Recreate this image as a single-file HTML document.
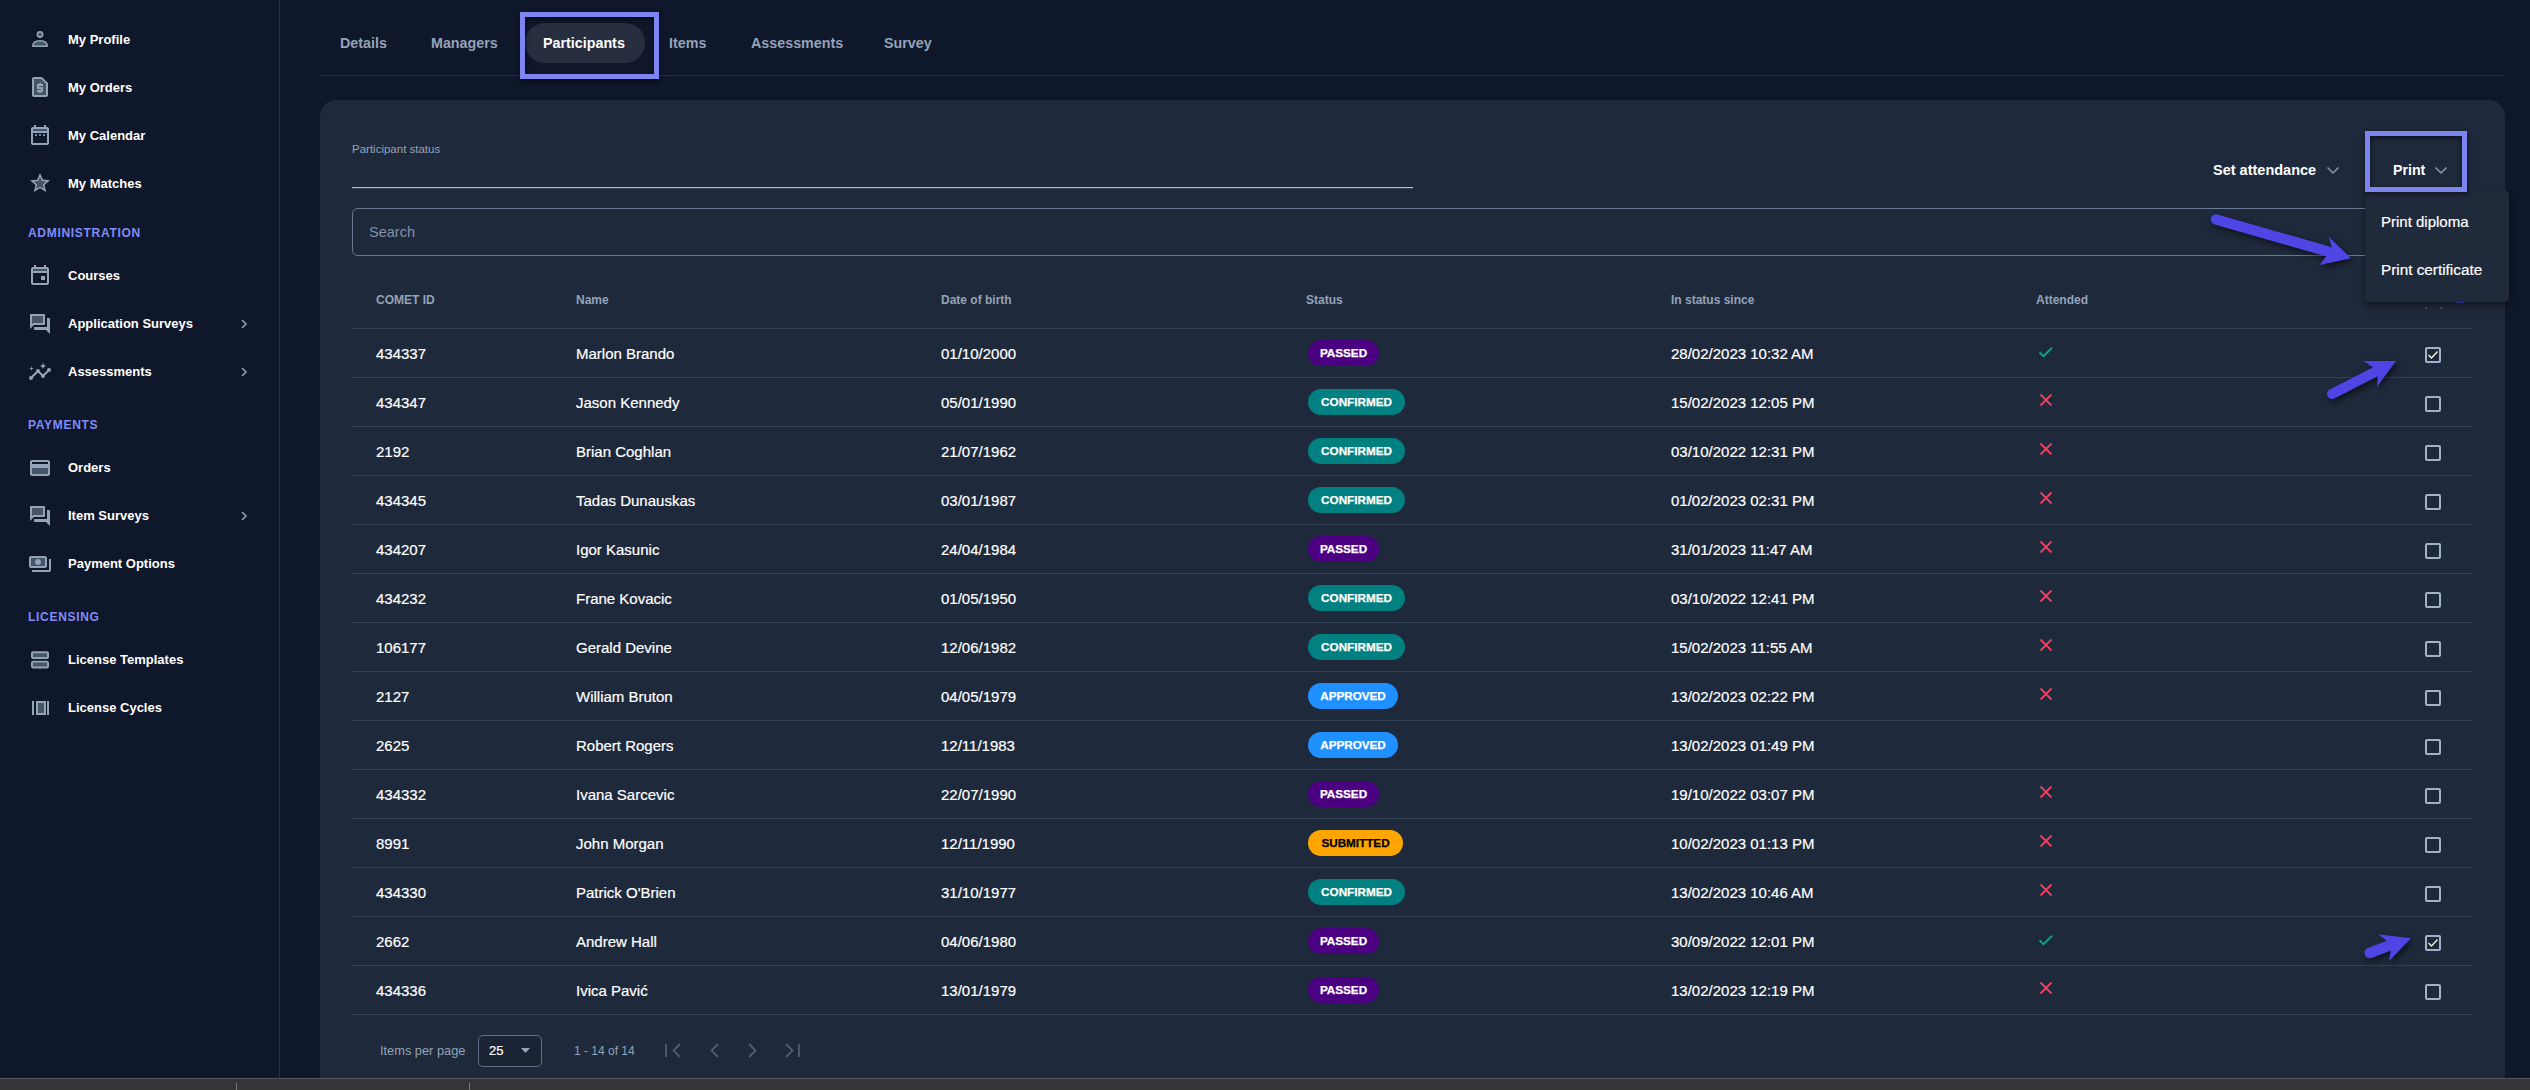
<!DOCTYPE html>
<html><head><meta charset="utf-8">
<style>
*{margin:0;padding:0;box-sizing:border-box}
html,body{width:2530px;height:1090px;overflow:hidden;background:#0f172a;font-family:"Liberation Sans",sans-serif;color:#fff}
.a{position:absolute;white-space:nowrap}
#side{position:absolute;left:0;top:0;width:280px;height:1078px;background:#0f172a;border-right:1px solid #273042}
.ni{position:absolute;margin-top:1px;left:68px;height:20px;line-height:20px;font-size:13px;font-weight:bold;color:#fff}
.ic{position:absolute;margin-top:1px;left:28px;width:24px;height:24px}
.ic svg{width:24px;height:24px;display:block}
.sh{position:absolute;margin-top:1px;left:28px;height:20px;line-height:20px;font-size:12px;font-weight:bold;color:#818cf8;letter-spacing:0.7px}
.chev{position:absolute;margin-top:1px;left:236px;width:16px;height:16px}
.tab{position:absolute;top:33px;height:20px;line-height:20px;font-size:14.3px;font-weight:bold;color:#94a3b8}
#card{position:absolute;left:320px;top:100px;width:2185px;height:1000px;background:#1e293b;border-radius:16px}
.hd{position:absolute;top:290px;height:20px;line-height:20px;font-size:12px;font-weight:bold;color:#94a3b8}
.hl{position:absolute;left:352px;width:2121px;height:1px;background:#334155}
.c{position:absolute;height:20px;line-height:20px;font-size:15px;color:#fff;-webkit-text-stroke:0.2px currentColor}
.b{position:absolute;left:1308px;height:26px;line-height:26px;border-radius:13px;font-size:11.7px;font-weight:bold;color:#fff;text-align:center;-webkit-text-stroke:0.25px currentColor}
.P{background:#4b0082;width:71px}
.C{background:#008080;width:97px}
.A{background:#1e90ff;width:90px}
.S{background:#ffa500;width:95px;color:#000}
.att{position:absolute;left:2034px;width:24px;height:24px}
.cb{position:absolute;left:2425px;width:16px;height:16px;border:2px solid #a3b1c9;border-radius:2px}
</style></head><body>
<div id="side"></div>
<!-- sidebar -->
<div class="ic" style="top:26px"><svg viewBox="0 0 24 24"><circle cx="12" cy="7.5" r="2.6" fill="#475569" stroke="#94a3b8" stroke-width="1.6"/><path d="M4.8 19.2c0-3.6 3.2-5.4 7.2-5.4s7.2 1.8 7.2 5.4z" fill="#475569" stroke="#94a3b8" stroke-width="1.6" stroke-linejoin="round"/></svg></div>
<div class="ni" style="top:29px">My Profile</div>
<div class="ic" style="top:74px"><svg viewBox="0 0 24 24"><path fill="#475569" d="M13.17 4H6v16h12V8.83z"/><path fill="#94a3b8" d="M14 2H6c-1.1 0-1.99.9-1.99 2L4 20c0 1.1.89 2 1.99 2H18c1.1 0 2-.9 2-2V8l-6-6zm4 18H6V4h7.17L18 8.83V20zm-5-11V8h-2v1h-1c-.55 0-1 .45-1 1v3c0 .55.45 1 1 1h3v1H9v2h2v1h2v-1h1c.55 0 1-.45 1-1v-3c0-.55-.45-1-1-1h-3v-1h4V9h-2z"/></svg></div>
<div class="ni" style="top:77px">My Orders</div>
<div class="ic" style="top:123px"><svg viewBox="0 0 24 24"><path d="M5 5h14v2H5z" fill="#475569"/><path fill="#94a3b8" d="M19 3h-1V1h-2v2H8V1H6v2H5c-1.11 0-1.99.9-1.99 2L3 19c0 1.1.89 2 2 2h14c1.1 0 2-.9 2-2V5c0-1.1-.9-2-2-2zm0 16H5V9h14v10zm0-12H5V5h14v2zM7 10.2h1.8V12H7zm4.1 0h1.8V12h-1.8zm4.1 0H17V12h-1.8z"/></svg></div>
<div class="ni" style="top:125px">My Calendar</div>
<div class="ic" style="top:170px"><svg viewBox="0 0 24 24"><path fill="#475569" d="M12 15.4l-3.76 2.27 1-4.28-3.32-2.88 4.38-.38L12 6.1l1.71 4.04 4.38.38-3.32 2.88 1 4.28z"/><path fill="#94a3b8" d="M22 9.24l-7.19-.62L12 2 9.19 8.63 2 9.24l5.46 4.73L5.82 21 12 17.27 18.18 21l-1.63-7.03L22 9.24zM12 15.4l-3.76 2.27 1-4.28-3.32-2.88 4.38-.38L12 6.1l1.71 4.04 4.38.38-3.32 2.88 1 4.28L12 15.4z"/></svg></div>
<div class="ni" style="top:173px">My Matches</div>

<div class="sh" style="top:222px">ADMINISTRATION</div>
<div class="ic" style="top:263px"><svg viewBox="0 0 24 24"><path d="M5 5h14v2H5z" fill="#475569"/><path fill="#94a3b8" d="M19 3h-1V1h-2v2H8V1H6v2H5c-1.11 0-1.99.9-1.99 2L3 19c0 1.1.89 2 2 2h14c1.1 0 2-.9 2-2V5c0-1.1-.9-2-2-2zm0 16H5V9h14v10zm0-12H5V5h14v2zm-6 5h4v4h-4z"/></svg></div>
<div class="ni" style="top:265px">Courses</div>
<div class="ic" style="top:311px"><svg viewBox="0 0 24 24"><path fill="#475569" d="M15 4H4v9.17L5.17 12H15V4z"/><path fill="#94a3b8" d="M21 6h-2v9H6v2c0 .55.45 1 1 1h11l4 4V7c0-.55-.45-1-1-1zm-5 7c.55 0 1-.45 1-1V3c0-.55-.45-1-1-1H3c-.55 0-1 .45-1 1v14l4-4h10zM4 13.17V4h11v7H5.17L4 12.17z"/></svg></div>
<div class="ni" style="top:313px">Application Surveys</div>
<svg class="chev" style="top:315px" viewBox="0 0 16 16"><path d="M6 4l4 4-4 4" fill="none" stroke="#94a3b8" stroke-width="1.5"/></svg>
<div class="ic" style="top:359px"><svg viewBox="0 0 24 24"><path fill="#94a3b8" d="M21 8c-1.45 0-2.26 1.44-1.93 2.51l-3.55 3.56c-.3-.09-.74-.09-1.04 0l-2.55-2.55C12.27 10.45 11.46 9 10 9c-1.45 0-2.27 1.44-1.93 2.52l-4.56 4.55C2.44 15.74 1 16.55 1 18c0 1.1.9 2 2 2 1.45 0 2.26-1.44 1.93-2.51l4.55-4.56c.3.09.74.09 1.04 0l2.55 2.55C12.73 16.55 13.54 18 15 18c1.45 0 2.27-1.44 1.93-2.52l3.56-3.55c1.07.33 2.51-.48 2.51-1.93 0-1.1-.9-2-2-2z"/><path fill="#94a3b8" d="M15 9l.94-2.07L18 6l-2.06-.93L15 3l-.92 2.07L12 6l2.08.93zM3.5 11L4 9l2-.5L4 8l-.5-2L3 8l-2 .5L3 9z"/></svg></div>
<div class="ni" style="top:361px">Assessments</div>
<svg class="chev" style="top:363px" viewBox="0 0 16 16"><path d="M6 4l4 4-4 4" fill="none" stroke="#94a3b8" stroke-width="1.5"/></svg>

<div class="sh" style="top:414px">PAYMENTS</div>
<div class="ic" style="top:455px"><svg viewBox="0 0 24 24"><path d="M4 12h16v6H4z" fill="#475569"/><path fill="#94a3b8" d="M20 4H4c-1.11 0-1.99.89-1.99 2L2 18c0 1.11.89 2 2 2h16c1.11 0 2-.89 2-2V6c0-1.11-.89-2-2-2zm0 14H4v-6h16v6zm0-10H4V6h16v2z"/></svg></div>
<div class="ni" style="top:457px">Orders</div>
<div class="ic" style="top:503px"><svg viewBox="0 0 24 24"><path fill="#475569" d="M15 4H4v9.17L5.17 12H15V4z"/><path fill="#94a3b8" d="M21 6h-2v9H6v2c0 .55.45 1 1 1h11l4 4V7c0-.55-.45-1-1-1zm-5 7c.55 0 1-.45 1-1V3c0-.55-.45-1-1-1H3c-.55 0-1 .45-1 1v14l4-4h10zM4 13.17V4h11v7H5.17L4 12.17z"/></svg></div>
<div class="ni" style="top:505px">Item Surveys</div>
<svg class="chev" style="top:507px" viewBox="0 0 16 16"><path d="M6 4l4 4-4 4" fill="none" stroke="#94a3b8" stroke-width="1.5"/></svg>
<div class="ic" style="top:551px"><svg viewBox="0 0 24 24"><path fill="#475569" d="M3 6h14v8H3z"/><path fill="#94a3b8" d="M19 14V6c0-1.1-.9-2-2-2H3c-1.1 0-2 .9-2 2v8c0 1.1.9 2 2 2h14c1.1 0 2-.9 2-2zm-2 0H3V6h14v8zm-7-7c-1.66 0-3 1.34-3 3s1.34 3 3 3 3-1.34 3-3-1.34-3-3-3zm13 0v11c0 1.1-.9 2-2 2H4v-2h17V7h2z"/></svg></div>
<div class="ni" style="top:553px">Payment Options</div>

<div class="sh" style="top:606px">LICENSING</div>
<div class="ic" style="top:647px"><svg viewBox="0 0 24 24"><path d="M5 5h14v4H5zm0 10h14v4H5z" fill="#475569"/><path fill="#94a3b8" d="M19 13H5c-1.1 0-2 .9-2 2v4c0 1.1.9 2 2 2h14c1.1 0 2-.9 2-2v-4c0-1.1-.9-2-2-2zm0 6H5v-4h14v4zm0-16H5c-1.1 0-2 .9-2 2v4c0 1.1.9 2 2 2h14c1.1 0 2-.9 2-2V5c0-1.1-.9-2-2-2zm0 6H5V5h14v4z" transform="translate(0 0.5) scale(1 0.95)"/></svg></div>
<div class="ni" style="top:649px">License Templates</div>
<div class="ic" style="top:695px"><svg viewBox="0 0 24 24"><path d="M10 7h6v10h-6z" fill="#475569"/><path fill="#94a3b8" d="M4 5h2v14H4zm4 0v14h10V5H8zm8 12h-6V7h6v10zm3-12h2v14h-2z"/></svg></div>
<div class="ni" style="top:697px">License Cycles</div>

<!-- tabs -->
<div class="a" style="left:320px;top:75px;width:2185px;height:1px;background:#283143"></div>
<div class="tab" style="left:340px">Details</div>
<div class="tab" style="left:431px">Managers</div>
<div class="a" style="left:525px;top:23px;width:120px;height:40px;border-radius:20px;background:#262e40"></div>
<div class="tab" style="left:543px;color:#fff">Participants</div>
<div class="tab" style="left:669px">Items</div>
<div class="tab" style="left:751px">Assessments</div>
<div class="tab" style="left:884px">Survey</div>
<div class="a" style="left:520px;top:12px;width:139px;height:67px;border:5px solid #7f85f0;box-shadow:0 2px 5px rgba(0,0,0,.6),inset 0 2px 5px rgba(0,0,0,.6)"></div>

<!-- card -->
<div id="card"></div>
<div class="a" style="left:352px;top:139px;height:20px;line-height:20px;font-size:11.5px;color:#94a3b8">Participant status</div>
<div class="a" style="left:352px;top:187px;width:1061px;height:1px;background:#b6bfcc;box-shadow:0 0.5px 0 rgba(182,191,204,.35)"></div>

<div class="a" style="left:2213px;top:160px;height:20px;line-height:20px;font-size:14.5px;font-weight:bold">Set attendance</div>
<svg class="a" style="left:2326px;top:164px" width="14" height="12" viewBox="0 0 14 12"><path d="M1.5 3.5l5.5 5.5 5.5-5.5" fill="none" stroke="#8a98ae" stroke-width="1.5"/></svg>
<div class="a" style="left:2393px;top:160px;height:20px;line-height:20px;font-size:14.2px;font-weight:bold">Print</div>
<svg class="a" style="left:2434px;top:164px" width="14" height="12" viewBox="0 0 14 12"><path d="M1.5 3.5l5.5 5.5 5.5-5.5" fill="none" stroke="#8a98ae" stroke-width="1.5"/></svg>

<div class="a" style="left:352px;top:208px;width:2121px;height:48px;border:1.3px solid #6b7a92;border-radius:6px"></div>
<div class="a" style="left:369px;top:222px;height:20px;line-height:20px;font-size:14.5px;color:#8391a8">Search</div>

<!-- header -->
<div class="hd" style="left:376px">COMET ID</div>
<div class="hd" style="left:576px">Name</div>
<div class="hd" style="left:941px">Date of birth</div>
<div class="hd" style="left:1306px">Status</div>
<div class="hd" style="left:1671px">In status since</div>
<div class="hd" style="left:2036px">Attended</div>

<!--ROWS-->
<div class="hl" style="top:328px"></div>
<div class="c" style="left:376px;top:344px">434337</div>
<div class="c" style="left:576px;top:344px">Marlon Brando</div>
<div class="c" style="left:941px;top:344px">01/10/2000</div>
<div class="b P" style="top:340px">PASSED</div>
<div class="c" style="left:1671px;top:344px">28/02/2023 10:32 AM</div>
<svg class="att" style="top:340px" viewBox="0 0 24 24"><path d="M5.5 12.3l4 3.8 8.5-8.4" fill="none" stroke="#14a08c" stroke-width="1.9"/></svg>
<div class="cb" style="top:347px"><svg width="12" height="12" viewBox="0 0 12 12" style="position:absolute;left:0;top:0"><path d="M1.5 6l3 3 6-6.5" fill="none" stroke="#fff6dc" stroke-width="1.3"/></svg></div>
<div class="hl" style="top:377px"></div>
<div class="c" style="left:376px;top:393px">434347</div>
<div class="c" style="left:576px;top:393px">Jason Kennedy</div>
<div class="c" style="left:941px;top:393px">05/01/1990</div>
<div class="b C" style="top:389px">CONFIRMED</div>
<div class="c" style="left:1671px;top:393px">15/02/2023 12:05 PM</div>
<svg class="att" style="top:389px" viewBox="0 0 24 24"><path d="M6.5 5.5l11 11M17.5 5.5l-11 11" fill="none" stroke="#ef4060" stroke-width="1.8"/></svg>
<div class="cb" style="top:396px"></div>
<div class="hl" style="top:426px"></div>
<div class="c" style="left:376px;top:442px">2192</div>
<div class="c" style="left:576px;top:442px">Brian Coghlan</div>
<div class="c" style="left:941px;top:442px">21/07/1962</div>
<div class="b C" style="top:438px">CONFIRMED</div>
<div class="c" style="left:1671px;top:442px">03/10/2022 12:31 PM</div>
<svg class="att" style="top:438px" viewBox="0 0 24 24"><path d="M6.5 5.5l11 11M17.5 5.5l-11 11" fill="none" stroke="#ef4060" stroke-width="1.8"/></svg>
<div class="cb" style="top:445px"></div>
<div class="hl" style="top:475px"></div>
<div class="c" style="left:376px;top:491px">434345</div>
<div class="c" style="left:576px;top:491px">Tadas Dunauskas</div>
<div class="c" style="left:941px;top:491px">03/01/1987</div>
<div class="b C" style="top:487px">CONFIRMED</div>
<div class="c" style="left:1671px;top:491px">01/02/2023 02:31 PM</div>
<svg class="att" style="top:487px" viewBox="0 0 24 24"><path d="M6.5 5.5l11 11M17.5 5.5l-11 11" fill="none" stroke="#ef4060" stroke-width="1.8"/></svg>
<div class="cb" style="top:494px"></div>
<div class="hl" style="top:524px"></div>
<div class="c" style="left:376px;top:540px">434207</div>
<div class="c" style="left:576px;top:540px">Igor Kasunic</div>
<div class="c" style="left:941px;top:540px">24/04/1984</div>
<div class="b P" style="top:536px">PASSED</div>
<div class="c" style="left:1671px;top:540px">31/01/2023 11:47 AM</div>
<svg class="att" style="top:536px" viewBox="0 0 24 24"><path d="M6.5 5.5l11 11M17.5 5.5l-11 11" fill="none" stroke="#ef4060" stroke-width="1.8"/></svg>
<div class="cb" style="top:543px"></div>
<div class="hl" style="top:573px"></div>
<div class="c" style="left:376px;top:589px">434232</div>
<div class="c" style="left:576px;top:589px">Frane Kovacic</div>
<div class="c" style="left:941px;top:589px">01/05/1950</div>
<div class="b C" style="top:585px">CONFIRMED</div>
<div class="c" style="left:1671px;top:589px">03/10/2022 12:41 PM</div>
<svg class="att" style="top:585px" viewBox="0 0 24 24"><path d="M6.5 5.5l11 11M17.5 5.5l-11 11" fill="none" stroke="#ef4060" stroke-width="1.8"/></svg>
<div class="cb" style="top:592px"></div>
<div class="hl" style="top:622px"></div>
<div class="c" style="left:376px;top:638px">106177</div>
<div class="c" style="left:576px;top:638px">Gerald Devine</div>
<div class="c" style="left:941px;top:638px">12/06/1982</div>
<div class="b C" style="top:634px">CONFIRMED</div>
<div class="c" style="left:1671px;top:638px">15/02/2023 11:55 AM</div>
<svg class="att" style="top:634px" viewBox="0 0 24 24"><path d="M6.5 5.5l11 11M17.5 5.5l-11 11" fill="none" stroke="#ef4060" stroke-width="1.8"/></svg>
<div class="cb" style="top:641px"></div>
<div class="hl" style="top:671px"></div>
<div class="c" style="left:376px;top:687px">2127</div>
<div class="c" style="left:576px;top:687px">William Bruton</div>
<div class="c" style="left:941px;top:687px">04/05/1979</div>
<div class="b A" style="top:683px">APPROVED</div>
<div class="c" style="left:1671px;top:687px">13/02/2023 02:22 PM</div>
<svg class="att" style="top:683px" viewBox="0 0 24 24"><path d="M6.5 5.5l11 11M17.5 5.5l-11 11" fill="none" stroke="#ef4060" stroke-width="1.8"/></svg>
<div class="cb" style="top:690px"></div>
<div class="hl" style="top:720px"></div>
<div class="c" style="left:376px;top:736px">2625</div>
<div class="c" style="left:576px;top:736px">Robert Rogers</div>
<div class="c" style="left:941px;top:736px">12/11/1983</div>
<div class="b A" style="top:732px">APPROVED</div>
<div class="c" style="left:1671px;top:736px">13/02/2023 01:49 PM</div>
<div class="cb" style="top:739px"></div>
<div class="hl" style="top:769px"></div>
<div class="c" style="left:376px;top:785px">434332</div>
<div class="c" style="left:576px;top:785px">Ivana Sarcevic</div>
<div class="c" style="left:941px;top:785px">22/07/1990</div>
<div class="b P" style="top:781px">PASSED</div>
<div class="c" style="left:1671px;top:785px">19/10/2022 03:07 PM</div>
<svg class="att" style="top:781px" viewBox="0 0 24 24"><path d="M6.5 5.5l11 11M17.5 5.5l-11 11" fill="none" stroke="#ef4060" stroke-width="1.8"/></svg>
<div class="cb" style="top:788px"></div>
<div class="hl" style="top:818px"></div>
<div class="c" style="left:376px;top:834px">8991</div>
<div class="c" style="left:576px;top:834px">John Morgan</div>
<div class="c" style="left:941px;top:834px">12/11/1990</div>
<div class="b S" style="top:830px">SUBMITTED</div>
<div class="c" style="left:1671px;top:834px">10/02/2023 01:13 PM</div>
<svg class="att" style="top:830px" viewBox="0 0 24 24"><path d="M6.5 5.5l11 11M17.5 5.5l-11 11" fill="none" stroke="#ef4060" stroke-width="1.8"/></svg>
<div class="cb" style="top:837px"></div>
<div class="hl" style="top:867px"></div>
<div class="c" style="left:376px;top:883px">434330</div>
<div class="c" style="left:576px;top:883px">Patrick O'Brien</div>
<div class="c" style="left:941px;top:883px">31/10/1977</div>
<div class="b C" style="top:879px">CONFIRMED</div>
<div class="c" style="left:1671px;top:883px">13/02/2023 10:46 AM</div>
<svg class="att" style="top:879px" viewBox="0 0 24 24"><path d="M6.5 5.5l11 11M17.5 5.5l-11 11" fill="none" stroke="#ef4060" stroke-width="1.8"/></svg>
<div class="cb" style="top:886px"></div>
<div class="hl" style="top:916px"></div>
<div class="c" style="left:376px;top:932px">2662</div>
<div class="c" style="left:576px;top:932px">Andrew Hall</div>
<div class="c" style="left:941px;top:932px">04/06/1980</div>
<div class="b P" style="top:928px">PASSED</div>
<div class="c" style="left:1671px;top:932px">30/09/2022 12:01 PM</div>
<svg class="att" style="top:928px" viewBox="0 0 24 24"><path d="M5.5 12.3l4 3.8 8.5-8.4" fill="none" stroke="#14a08c" stroke-width="1.9"/></svg>
<div class="cb" style="top:935px"><svg width="12" height="12" viewBox="0 0 12 12" style="position:absolute;left:0;top:0"><path d="M1.5 6l3 3 6-6.5" fill="none" stroke="#fff6dc" stroke-width="1.3"/></svg></div>
<div class="hl" style="top:965px"></div>
<div class="c" style="left:376px;top:981px">434336</div>
<div class="c" style="left:576px;top:981px">Ivica Pavić</div>
<div class="c" style="left:941px;top:981px">13/01/1979</div>
<div class="b P" style="top:977px">PASSED</div>
<div class="c" style="left:1671px;top:981px">13/02/2023 12:19 PM</div>
<svg class="att" style="top:977px" viewBox="0 0 24 24"><path d="M6.5 5.5l11 11M17.5 5.5l-11 11" fill="none" stroke="#ef4060" stroke-width="1.8"/></svg>
<div class="cb" style="top:984px"></div>
<div class="hl" style="top:1014px"></div>
<!--/ROWS-->

<!-- pagination -->
<div class="a" style="left:380px;top:1041px;height:20px;line-height:20px;font-size:12.8px;color:#94a3b8">Items per page</div>
<div class="a" style="left:478px;top:1035px;width:64px;height:32px;border:1.3px solid #5f6f88;border-radius:5px;background:#1b2435"></div>
<div class="a" style="left:489px;top:1041px;height:20px;line-height:20px;font-size:13px;color:#fff;-webkit-text-stroke:0.2px #fff">25</div>
<svg class="a" style="left:520px;top:1047px" width="11" height="7" viewBox="0 0 11 7"><path d="M1 1h9l-4.5 5z" fill="#94a3b8"/></svg>
<div class="a" style="left:574px;top:1041px;height:20px;line-height:20px;font-size:12px;color:#94a3b8">1 - 14 of 14</div>
<svg class="a" style="left:660px;top:1038px" width="150" height="24" viewBox="0 0 150 24"><g fill="none" stroke="#4f5d73" stroke-width="1.8"><path d="M6 6v13M20 6l-6.5 6.5L20 19"/><path d="M58 6l-6.5 6.5L58 19"/><path d="M89 6l6.5 6.5L89 19"/><path d="M126 6l6.5 6.5L126 19M139 6v13"/></g></svg>

<div class="a" style="left:2425px;top:307px;width:2px;height:2px;border-radius:1px;background:#4a5568"></div>
<div class="a" style="left:2440px;top:307px;width:2px;height:2px;border-radius:1px;background:#4a5568"></div>
<div class="a" style="left:2456px;top:298px;width:9px;height:5px;border-radius:2px;background:#4f44e4"></div>
<!-- dropdown -->
<div class="a" style="left:2365px;top:190px;width:144px;height:112px;background:#1f2a3b;border-radius:5px;box-shadow:0 3px 5px -1px rgba(0,0,0,.35),0 5px 8px rgba(0,0,0,.18)"></div>
<div class="a" style="left:2381px;top:212px;height:20px;line-height:20px;font-size:15px;-webkit-text-stroke:0.2px #fff">Print diploma</div>
<div class="a" style="left:2381px;top:260px;height:20px;line-height:20px;font-size:15.3px;-webkit-text-stroke:0.2px #fff">Print certificate</div>
<div class="a" style="left:2365px;top:131px;width:102px;height:61px;border:5px solid #7f85f0;box-shadow:0 2px 5px rgba(0,0,0,.6),inset 0 2px 5px rgba(0,0,0,.6)"></div>

<!-- arrows -->
<svg class="a" style="left:0;top:0;filter:drop-shadow(2px 3px 3px rgba(0,0,0,.55))" width="2530" height="1090" viewBox="0 0 2530 1090">
<g fill="#4f44e4" stroke="#4f44e4" stroke-linecap="round">
<path d="M2216 219.5L2328 251.5" stroke-width="10.5" fill="none"/>
<path d="M2351 258.3L2319.7 265L2326.5 255.7L2331.6 247.2L2329 237z" stroke="none"/>
<path d="M2332 394L2375 372" stroke-width="10" fill="none"/>
<path d="M2396 361L2363.6 361L2372.6 367.3L2377.8 376.3L2376.8 387z" stroke="none"/>
<path d="M2369.7 953L2388 946" stroke-width="10.5" fill="none"/>
<path d="M2411 938.3L2378.4 934.2L2387.2 941.3L2390.6 951.4L2389 961.3z" stroke="none"/>
</g></svg>

<!-- bottom bar -->
<div class="a" style="left:0;top:1078px;width:2530px;height:12px;background:#353538;border-top:1px solid #56575b"></div>
<div class="a" style="left:236px;top:1083px;width:1px;height:7px;background:#77777b"></div>
<div class="a" style="left:469px;top:1083px;width:1px;height:7px;background:#77777b"></div>
</body></html>
